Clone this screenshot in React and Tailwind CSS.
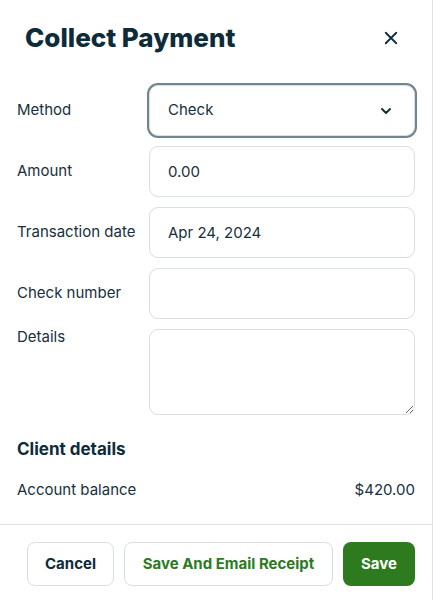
import React from 'react';

const Field = ({ label, children, top }) => (
  <div className={`flex ${top ? 'items-start' : 'items-center'}`}>
    <label className={`w-[132px] shrink-0 text-[15px] text-[#17303d] ${top ? 'leading-[15px]' : ''}`}>{label}</label>
    <div className="flex-1">{children}</div>
  </div>
);

const inputCls =
  'w-full h-[51px] rounded-[9px] border border-[#d9dfe2] bg-white px-[18px] text-[15px] text-[#17303d] outline-none';

export default function App() {
  return (
    <div
      className="w-[433px] h-[600px] bg-white border-r border-[#dfe3e5] flex flex-col"
      style={{ fontFamily: 'Inter, "Liberation Sans", sans-serif' }}
    >
      {/* Header */}
      <div className="flex items-center justify-between pl-[25px] pr-[32px] pt-[22px] h-[54px]">
        <h1 className="text-[26px] leading-[32px] font-extrabold text-[#0d2b38]">Collect Payment</h1>
        <button className="text-[#0d2b38]">
          <svg width="18" height="18" viewBox="0 0 24 24" fill="none" stroke="currentColor" strokeWidth="2.4" strokeLinecap="round">
            <path d="M5 5l14 14M19 5L5 19" />
          </svg>
        </button>
      </div>

      {/* Form */}
      <div className="px-[17px] pt-[31px] flex flex-col gap-[10px]">
        <Field label="Method">
          <div className="w-full h-[51px] rounded-[9px] border border-[#d9dfe2] ring-2 ring-[#71858f] bg-white pl-[18px] pr-[22px] flex items-center justify-between text-[15px] text-[#17303d]">
            <span>Check</span>
            <svg width="12" height="8" viewBox="0 0 12 8" fill="none" stroke="#17303d" strokeWidth="2" strokeLinecap="round" strokeLinejoin="round">
              <path d="M2 2l4 4 4-4" />
            </svg>
          </div>
        </Field>
        <Field label="Amount">
          <input className={inputCls} defaultValue="0.00" />
        </Field>
        <Field label="Transaction date">
          <input className={inputCls} defaultValue="Apr 24, 2024" />
        </Field>
        <Field label="Check number">
          <input className={inputCls} defaultValue="" />
        </Field>
        <Field label="Details" top>
          <textarea className="w-full h-[86px] block rounded-[9px] border border-[#d9dfe2] bg-white px-[18px] py-[12px] text-[15px] text-[#17303d] outline-none" />
        </Field>
      </div>

      {/* Client details */}
      <div className="px-[17px] pt-[24px]">
        <h2 className="text-[17px] font-bold text-[#0d2b38] leading-[20px]">Client details</h2>
        <div className="flex items-center justify-between mt-[20px] text-[15px] text-[#17303d]">
          <span>Account balance</span>
          <span>$420.00</span>
        </div>
      </div>

      {/* Footer */}
      <div className="mt-auto border-t border-[#dfe3e5] px-[17px] pt-[17px] pb-[14px] flex justify-end gap-[10px]">
        <button className="h-[44px] w-[87px] rounded-[8px] border border-[#d9dfe2] bg-white text-[15px] font-bold text-[#0d2b38]">
          Cancel
        </button>
        <button className="h-[44px] w-[209px] rounded-[8px] border border-[#d9dfe2] bg-white text-[15px] font-bold text-[#2d7a1f]">
          Save And Email Receipt
        </button>
        <button className="h-[44px] w-[72px] rounded-[8px] bg-[#2d7a1f] text-[15px] font-bold text-white">
          Save
        </button>
      </div>
    </div>
  );
}
